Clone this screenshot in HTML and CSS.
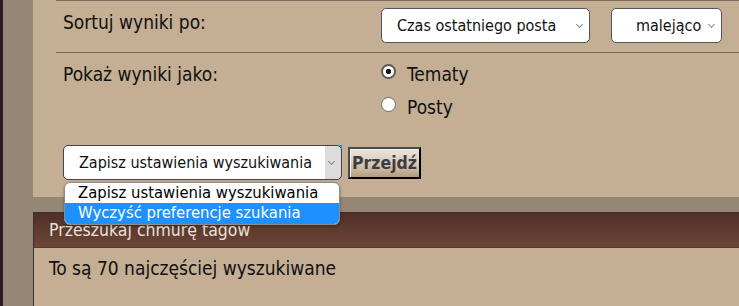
FILE: index.html
```html
<!DOCTYPE html>
<html lang="pl">
<head>
    <meta charset="UTF-8">
    <title>Szukaj</title>
    <link rel="stylesheet" href="styles.css">
</head>
<body>
    <div class="page">
        <form class="panel">
            <div class="row row-sort">
                <div class="label">Sortuj wyniki po:</div>
                <div class="value">
                    <span class="pick">
                        <select name="sk" class="box box-wide">
                            <option>Czas ostatniego posta</option>
                        </select>
                    </span>
                    <span class="pick">
                        <select name="sd" class="box box-small">
                            <option>malejąco</option>
                        </select>
                    </span>
                </div>
            </div>
            <div class="row row-show">
                <div class="label">Pokaż wyniki jako:</div>
                <div class="value value-radios">
                    <label class="option"><input type="radio" name="sr" checked> Tematy</label>
                    <label class="option"><input type="radio" name="sr"> Posty</label>
                </div>
            </div>
            <div class="row row-actions">
                <span class="pick pick-open">
                    <select name="action" class="box box-action">
                        <option>Zapisz ustawienia wyszukiwania</option>
                        <option>Wyczyść preferencje szukania</option>
                    </select>
                    <!-- opened list of the select -->
                    <span class="dropdown">
                        <span class="dropdown-item">Zapisz ustawienia wyszukiwania</span>
                        <span class="dropdown-item active">Wyczyść preferencje szukania</span>
                    </span>
                </span>
                <button type="submit" class="go">Przejdź</button>
            </div>
        </form>

        <div class="tags">
            <h3 class="tags-head">Przeszukaj chmurę tagów</h3>
            <p class="tags-body">To są 70 najczęściej wyszukiwane</p>
        </div>
    </div>
</body>
</html>
```

FILE: styles.css
```css
body {
    margin: 0;
    background-color: #958675;
    border-left: 3px solid #2b1a27;
    font-family: "DejaVu Sans", sans-serif;
    font-stretch: condensed;
    color: #111;
    height: 306px;
    overflow: hidden;
}
.page {
    margin-left: 30px;
}
.panel {
    background: #c4ae94;
    padding: 0 0 17px 23px;
    margin: 0;
}
.row {
    display: flex;
}
.row-sort {
    border-top: 1px solid #7b6b5f;
    height: 51px;
}
.row-show {
    border-top: 1px solid #7b6b5f;
    height: 70px;
}
.label {
    width: 318px;
    padding: 10px 0 0 7px;
    font-size: 19px;
    line-height: 22px;
}
.value {
    display: flex;
    gap: 21px;
    padding-top: 7px;
}
.value-radios {
    flex-direction: column;
    gap: 0;
    padding-top: 4px;
}
.option {
    display: flex;
    align-items: center;
    height: 33px;
    font-size: 19px;
}
.option input {
    appearance: none;
    width: 15px;
    height: 15px;
    margin: 0 11px 4px 0;
    border: 1px solid #6e6e6e;
    border-radius: 50%;
    background: #fff;
}
.option input:checked {
    border: 2px solid #5a5a5a;
    background: radial-gradient(circle, #1a1a1a 0 2.5px, #fff 3px);
}
.pick {
    position: relative;
    display: inline-block;
}
.pick::after {
    content: "";
    position: absolute;
    right: 8px;
    top: 14px;
    width: 4px;
    height: 4px;
    border-right: 1px solid #8a8a8a;
    border-bottom: 1px solid #8a8a8a;
    transform: rotate(45deg);
    pointer-events: none;
}
.box {
    appearance: none;
    height: 35px;
    padding: 0 0 0 15px;
    border: 1px solid #555;
    border-radius: 5px;
    background: #fff;
    font-family: inherit;
    font-stretch: condensed;
    font-size: 16px;
    color: #111;
}
.box-wide {
    width: 209px;
}
.box-small {
    width: 111px;
    padding-left: 24px;
}
.row-actions {
    align-items: center;
    margin-top: 22px;
    padding-left: 7px;
}
.box-action {
    width: 279px;
    border-color: #444;
    background: linear-gradient(to right, #fff 0 261px, #dcdcdc 261px);
}
.pick-open::before {
    content: "";
    position: absolute;
    right: 0;
    top: 0;
    width: 3px;
    height: 3px;
    border-top: 1px solid #2a8ae0;
    border-right: 1px solid #2a8ae0;
}
.dropdown {
    position: absolute;
    left: 1px;
    top: 37px;
    width: 274px;
    display: flex;
    flex-direction: column;
    background: #fff;
    border: 1px solid #8c8c8c;
    border-radius: 6px;
    overflow: hidden;
    box-shadow: 0 1px 3px rgba(0, 0, 0, 0.35);
    z-index: 2;
}
.dropdown-item {
    height: 20px;
    line-height: 20px;
    padding-left: 13px;
    font-size: 16.5px;
    color: #000;
    white-space: nowrap;
}
.dropdown-item.active {
    height: 21px;
    background: #1e90ff;
    color: #fff;
}
.go {
    margin-left: 6px;
    width: 73px;
    height: 32px;
    padding: 0;
    border: 2px solid;
    border-color: #4a4a4a #000 #000 #4a4a4a;
    box-shadow: inset 1px 1px 0 #f4f1ee;
    background: linear-gradient(#ece6df, #d2c3b0 60%, #b59c7e);
    font-family: inherit;
    font-stretch: condensed;
    font-size: 17.5px;
    font-weight: bold;
    color: #3e3e3e;
}
.tags {
    margin-top: 15px;
    min-height: 96px;
    background: #c4ae94;
    border-left: 1px solid #3a2f2b;
}
.tags-head {
    margin: 0;
    height: 34px;
    padding-left: 15px;
    border-top: 1px solid #3b322f;
    border-bottom: 1px solid #4b413b;
    background: linear-gradient(#502f28, #6c4636);
    color: #e9e1da;
    font-size: 17.5px;
    font-weight: normal;
    line-height: 34px;
}
.tags-body {
    margin: 0;
    padding: 9px 0 0 15px;
    font-size: 19px;
    line-height: 22px;
}
```
